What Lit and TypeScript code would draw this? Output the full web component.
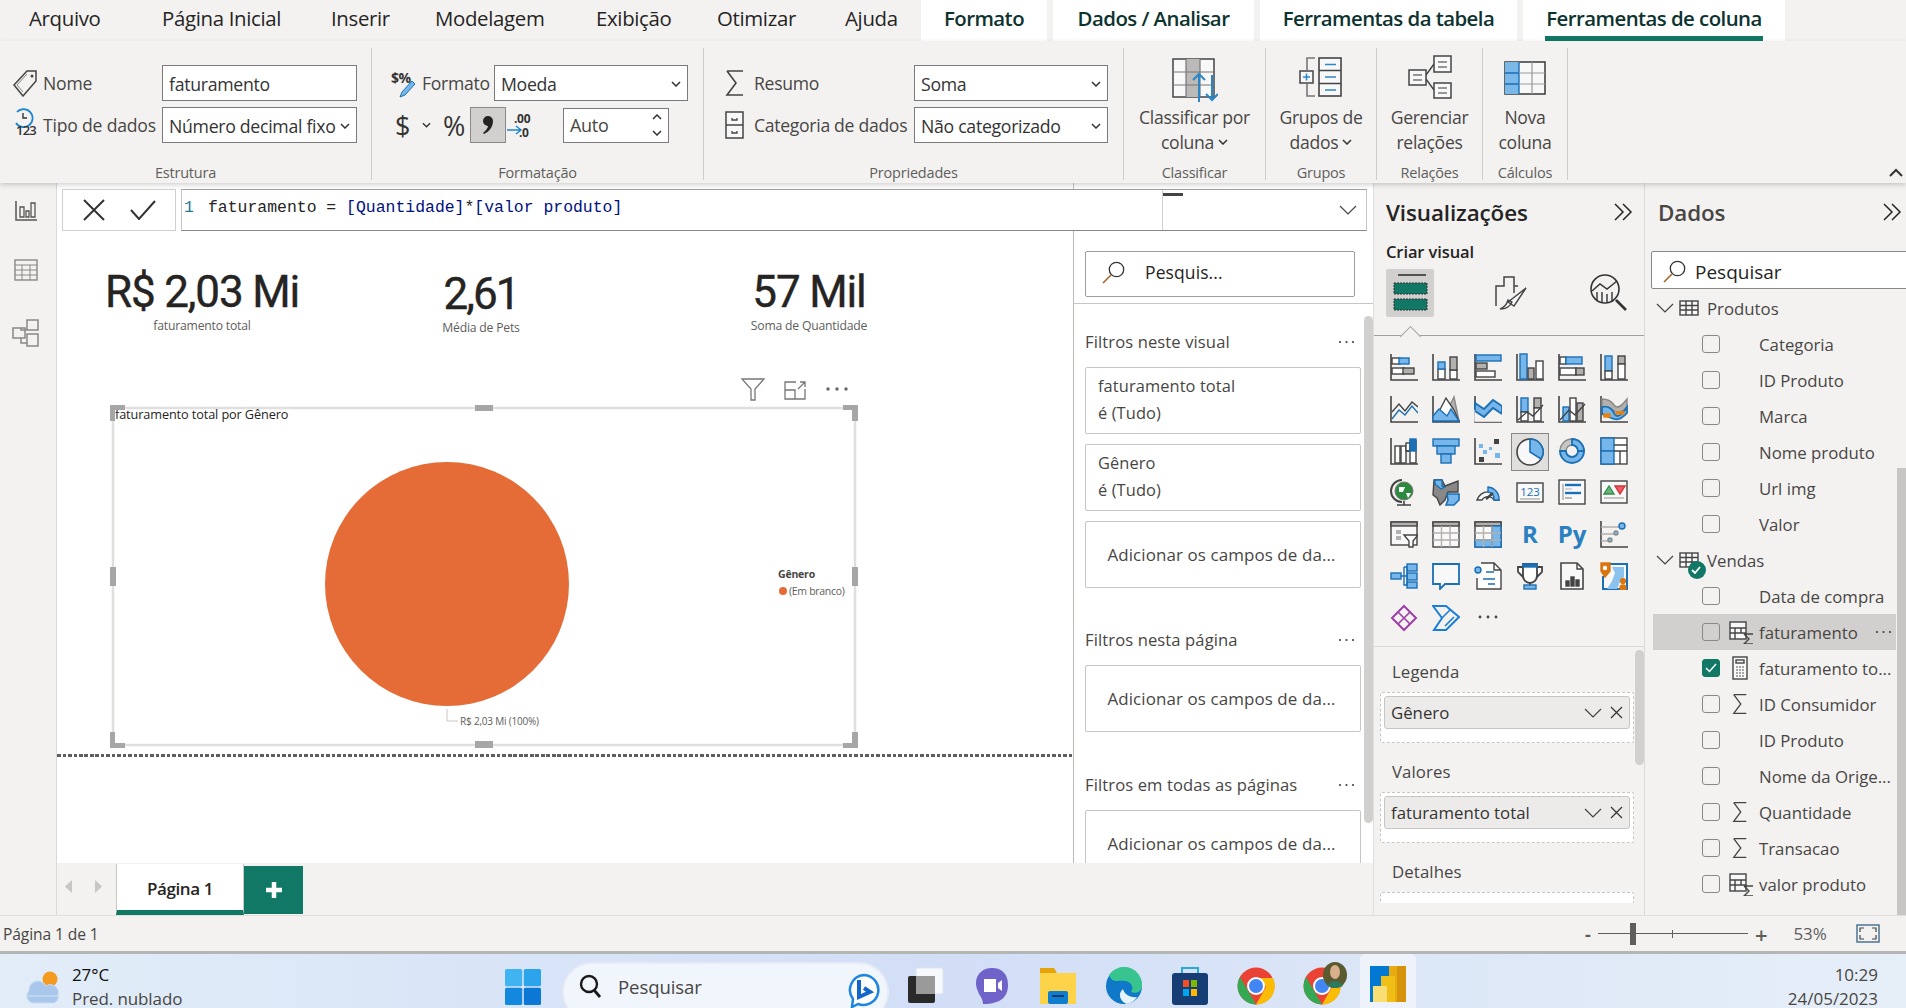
import { LitElement, html, svg, css } from 'lit';
import { customElement } from 'lit/decorators.js';

const D = '#444';
const B = '#76b6ea';
const S = '#1a6fb5';
const G = '#b3b0ad';
const W = '#fff';

const r = (x: number, y: number, w: number, h: number, f = W, s = D) =>
  svg`<rect x=${x} y=${y} width=${w} height=${h} fill=${f} stroke=${s} stroke-width="1.4" />`;
const p = (d: string, f = 'none', s = D, sw = 1.4) =>
  svg`<path d=${d} fill=${f} stroke=${s} stroke-width=${sw} />`;
const c = (x: number, y: number, rad: number, f = W, s = D, sw = 1.4) =>
  svg`<circle cx=${x} cy=${y} r=${rad} fill=${f} stroke=${s} stroke-width=${sw} />`;
const axes = p('M1 1V27H28', 'none', D, 1.6);

// strings are the two script visuals, drawn as plain text
const vizIcons = [
  svg`${axes}${r(2, 5, 8, 6)}${r(9, 5, 10, 6, B, S)}${r(2, 15, 12, 6)}${r(13, 15, 11, 6, G)}`,
  svg`${axes}${r(6, 16, 7, 10)}${r(6, 9, 7, 7, B, S)}${r(18, 17, 7, 9)}${r(18, 4, 7, 13, G)}`,
  svg`${axes}${r(2, 2, 25, 6, B, S)}${r(2, 10, 11, 6, G)}${r(2, 18, 19, 6)}`,
  svg`${axes}${r(4, 1, 7, 25, B, S)}${r(12, 15, 6, 11, G)}${r(20, 8, 7, 18)}`,
  svg`${axes}${r(2, 4, 6, 7)}${r(8, 4, 16, 7, B, S)}${r(2, 15, 16, 7)}${r(18, 15, 8, 7, G)}`,
  svg`${axes}${r(5, 3, 7, 15, B, S)}${r(5, 18, 7, 8)}${r(18, 3, 7, 8, G)}${r(18, 11, 7, 15)}`,
  svg`${axes}${p('M2 17L9 9L15 16L22 7L28 12')}${p('M2 24L9 15L15 20L22 11L28 18', 'none', S)}`,
  svg`${axes}${p('M16 14L22 2L27 26H18Z', G, '#8a8886')}${p('M2 26L14 3L22 15L27 26Z', W)}${p('M1 26V21L7 14L15 21L19 14L27 26Z', B, S)}`,
  svg`${axes}${p('M1 8L10 14L19 5L28 11V19L19 13L10 22L1 16Z', B, S, 1.8)}${p('M1 16L10 22L19 13L28 19V26H1Z', '#f3f2f1', '#f3f2f1')}${p('M1 16L10 22L19 13L28 19', 'none', S, 1.8)}`,
  svg`${axes}${r(5, 3, 7, 14, B, S)}${r(5, 17, 7, 9)}${r(18, 3, 7, 10, G)}${r(18, 13, 7, 13)}${p('M2 25L11 17L17 21L27 10')}`,
  svg`${axes}${r(5, 12, 6, 14, B, S)}${r(12, 3, 6, 23)}${r(19, 8, 6, 18, G)}${p('M2 25L11 15L17 20L27 9')}`,
  svg`${axes}${p('M2 4Q10 4 14 10T27 4V12Q20 20 14 16T2 12Z', G, '#8a8886')}${p('M2 12Q10 10 14 18T27 12V18Q20 26 14 24T2 19Z', B, S, 1.8)}${r(16, 17, 8, 2, '#e8820e', '#e8820e')}${r(4, 19, 6, 3, '#e8820e', '#e8820e')}`,
  svg`${axes}${r(5, 9, 5, 17)}${r(11, 9, 5, 17)}${r(16, 6, 4, 8)}${p('M16 14H20V4H26V26H20V14', W)}${r(20, 2, 6, 12, S, S)}`,
  svg`${r(1, 2, 26, 7, B, S)}${r(5, 9, 18, 8, B, S)}${r(9, 17, 10, 9, B, S)}`,
  svg`${axes}${r(5, 7, 4, 4, B, 'none')}${r(9, 13, 4, 4, B, 'none')}${r(5, 20, 5, 5, D, 'none')}${r(20, 2, 5, 5, D, 'none')}${r(21, 16, 5, 5, B, 'none')}${r(15, 10, 3, 3, B, 'none')}`,
  svg`${c(14, 14, 13, '#f8f8f8', D, 1.6)}${p('M14 14V1A13 13 0 0 1 25 21Z', B, S, 1.6)}`,
  svg`${p('M2 14A12 12 0 0 1 26 14H20A6 6 0 0 0 8 14Z', '#c8c6c4', '#8a8886')}${p('M2 14A12 12 0 1 0 26 14H20A6 6 0 1 1 8 14Z', B, S, 1.8)}${p('M14 2A12 12 0 0 1 26 14H20A6 6 0 0 0 14 8Z', B, S, 1.8)}`,
  svg`${r(1, 1, 26, 26)}${r(1, 1, 13, 13, B, S)}${r(1, 14, 13, 13, B, S)}${p('M14 8H27M20 14V27M14 14H27')}`,
  svg`${p('M12 2A11 11 0 0 0 12 24', 'none', D, 2)}${c(14, 13, 9, '#2c8a3e', '#777', 1)}${p('M9 9H15L13 14H9ZM16 15H21L18 20Z', W, 'none')}${p('M7 27H21M14 23V27', 'none', D, 1.6)}`,
  svg`${p('M2 2H10L13 8L26 3V14H16L13 22L8 27L5 20L1 17Z', '#8a8886', D)}${p('M3 2H10V8L13 9L9 11L3 6Z', B, S)}${p('M15 16H27V22L22 27H14L16 22Z', B, S, 1.6)}`,
  svg`${p('M3 22A11.5 11.5 0 0 1 25 22H20A7 7 0 0 0 8 22Z', '#f8f8f8', D)}${p('M14 9A12 12 0 0 1 25 22H20A7 7 0 0 0 14 14Z', B, S)}${p('M12 21L19 15', 'none', D, 2.4)}`,
  svg`${r(1, 5, 26, 19, '#f8f8f8')}<text x="14" y="18" text-anchor="middle" font-size="11.5" fill=${S} font-family="Open Sans">123</text>${p('M4 21H24', 'none', G)}`,
  svg`${r(1, 2, 26, 24, '#f8f8f8', D)}${p('M5 6V22', 'none', G, 1.6)}${p('M7 7H23', 'none', S, 2.4)}${p('M7 11H14', 'none', G, 1)}${p('M7 15H23', 'none', S, 2.4)}${p('M7 20H14', 'none', G, 1.8)}`,
  svg`${r(1, 3, 26, 22, '#f8f8f8')}${p('M4 16L9 8L14 16Z', '#6ab37a', '#2f8f4a')}${p('M15 8H25L20 16Z', '#ee5a63', '#d13438')}${p('M4 20H24', 'none', G)}`,
  svg`${r(1, 2, 26, 23, '#f8f8f8')}${r(1, 2, 26, 4, G)}${r(6, 10, 5, 4, G, 'none')}${r(6, 16, 5, 4, G, 'none')}${p('M14 15H28L23 21V27H19V21Z', W, D)}`,
  svg`${r(1, 2, 26, 25, '#f8f8f8')}${r(1, 2, 26, 4, G)}${p('M1 13H27M1 20H27M9.5 6V27M18 6V27', 'none', G)}`,
  svg`${r(1, 2, 26, 25, '#f8f8f8')}${r(1, 2, 26, 4, G)}${r(1, 20, 26, 7, B, S)}${r(18, 6, 9, 21, B, S)}${p('M1 13H27M1 20H27M9.5 6V27M18 6V27', 'none', G)}`,
  'R',
  'Py',
  svg`${axes}${p('M1 7H20M1 14H14M1 21H8', 'none', G, 1.4)}${c(22, 6, 3, B, S)}${c(16, 13, 2, B, '#8a8886')}${c(10, 20, 2, B, '#8a8886')}`,
  svg`${r(1, 11, 10, 6, B, S)}${r(17, 2, 10, 7, B, S)}${r(17, 11, 10, 7, B, S)}${r(17, 20, 10, 6, B, S)}${p('M11 14H17M14 5H17V23H14V5', 'none', S)}`,
  svg`${p('M1 2H27V22H13L8 27V22H1Z', '#f8f8f8', S, 1.8)}`,
  svg`${p('M7 1H20L27 8V27H3V16', W, D)}${p('M20 1V8H27', 'none', D)}${c(4, 8, 3, B, S)}${p('M12 10H20M9 17H21M14 22H21', 'none', S, 1.4)}`,
  svg`${p('M7 2H21V14A7 7 0 0 1 7 14ZM7 5H2V10L8 16M21 5H26V10L20 16', W, D, 1.8)}${r(7, 2, 14, 3, S, S)}${p('M14 20V23', 'none', D, 2)}${r(8, 23, 12, 4, B, S)}`,
  svg`${p('M3 1H19L25 7V27H3Z', '#f8f8f8', D, 1.6)}${p('M19 1V7H25', 'none', D)}${r(8, 19, 3, 5, D, D)}${r(13, 15, 3, 9, D, D)}${r(18, 18, 3, 6, D, D)}`,
  svg`${p('M5 2H27V27H3V14', '#f8f8f8', S, 2)}${p('M12 5H24V15L20 20L17 27H7L12 19L15 11Z', '#8cc3ee', 'none')}${p('M1 1H10V9L5 15L1 9Z', '#d9760e', '#d9760e')}${c(5, 6, 1.5, W, W)}${c(23, 19, 2.4, '#d9760e', '#d9760e')}${c(23, 26, 3, '#d9760e', '#d9760e')}`,
  svg`${p('M14 2L26 14L14 26L2 14Z', 'none', '#9c3fa8', 2)}${p('M8 8L20 20M20 8L8 20', 'none', '#9c3fa8', 1.6)}`,
  svg`${p('M1 2H14L27 13L14 26H2L10 14Z', 'none', '#1b7fd6', 2)}${p('M10 14L18 6M13 22L22 13', 'none', '#1b7fd6', 1.6)}`,
  svg`<circle cx="6" cy="13" r="1.4" fill="#444" /><circle cx="14" cy="13" r="1.4" fill="#444" /><circle cx="22" cy="13" r="1.4" fill="#444" />`,
];

const sigma = svg`<path d="M2 2H18M2 2L11 14L2 26H18" fill="none" stroke="#444" stroke-width="1.6" />`;
const measure = svg`${r(1, 2, 16, 17, '#f8f8f8')}${p('M1 8H17M1 13H17M6 8V19M12 8V13', 'none', D)}${p('M15 14H24M15 14L20 19L15 24H24', 'none', D, 1.4)}`;
const tableIco = svg`${r(1, 1, 18, 14, '#f8f8f8')}${p('M1 5.5H19M1 10H19M7 1V15M13 1V15', 'none', D)}`;
const calcIco = svg`${r(2, 1, 14, 22, '#f8f8f8')}${r(5, 4, 8, 3, '#f8f8f8')}<path d="M5 11H7M8 11H10M11 11H13M5 14H7M8 14H10M11 14H13M5 17H7M8 17H10M11 17H13M5 20H7M8 20H10M11 20H13" stroke="#555" />`;

type Field = { name: string; icon?: 'sigma' | 'measure' | 'calc'; checked?: boolean; hover?: boolean };

const produtos: Field[] = [
  { name: 'Categoria' },
  { name: 'ID Produto' },
  { name: 'Marca' },
  { name: 'Nome produto' },
  { name: 'Url img' },
  { name: 'Valor' },
];
const vendas: Field[] = [
  { name: 'Data de compra' },
  { name: 'faturamento', icon: 'measure', hover: true },
  { name: 'faturamento to...', icon: 'calc', checked: true },
  { name: 'ID Consumidor', icon: 'sigma' },
  { name: 'ID Produto' },
  { name: 'Nome da Orige...' },
  { name: 'Quantidade', icon: 'sigma' },
  { name: 'Transacao', icon: 'sigma' },
  { name: 'valor produto', icon: 'measure' },
];

const plainTabs = [
  ['Arquivo', 133],
  ['Página Inicial', 169],
  ['Inserir', 104],
  ['Modelagem', 161],
  ['Exibição', 121],
  ['Otimizar', 128],
  ['Ajuda', 76],
] as const;

const chevron = html`<svg class="mini" width="10" height="6" viewBox="0 0 10 6"><path d="M1 1L5 5L9 1" fill="none" stroke="#333" stroke-width="1.5" /></svg>`;
const bigChevron = html`<svg width="18" height="10" viewBox="0 0 18 10"><path d="M1 1L9 9L17 1" fill="none" stroke="#444" stroke-width="1.2" /></svg>`;
const cross = html`<svg width="13" height="13" viewBox="0 0 13 13"><path d="M1 1L12 12M12 1L1 12" fill="none" stroke="#333" stroke-width="1.2" /></svg>`;
const doubleChevron = html`<svg width="19" height="18" viewBox="0 0 19 18"><path d="M1 1L9 9L1 17M9 1L17 9L9 17" fill="none" stroke="#252423" stroke-width="1.5" /></svg>`;
const lens = html`<svg width="23" height="23" viewBox="0 0 23 23"><circle cx="14.5" cy="8.5" r="7.2" fill="none" stroke="#333" stroke-width="1.3" /><path d="M9 14L1 22" stroke="#a4642a" stroke-width="1.6" /></svg>`;
const ellipsis = html`<svg width="17" height="4" viewBox="0 0 17 4"><circle cx="2" cy="2" r="1.1" fill="#444" /><circle cx="8.5" cy="2" r="1.1" fill="#444" /><circle cx="15" cy="2" r="1.1" fill="#444" /></svg>`;

@customElement('app-root')
export class AppRoot extends LitElement {
  static styles = css`
    :host {
      display: block;
      width: 1906px;
      height: 1008px;
      overflow: hidden;
      background: #f3f2f1;
      font-family: 'Open Sans', 'Noto Sans', sans-serif;
      color: #252423;
    }
    * { box-sizing: border-box; }
    svg { display: block; flex: none; }

    .tabs { display: flex; height: 41px; padding-left: 29px; font-size: 20.4px; letter-spacing: -0.33px; }
    .tab { display: flex; align-items: center; height: 36px; }
    .ctx {
      display: flex; justify-content: center; align-items: center; height: 41px;
      background: #fff; margin-right: 6px; color: #0d3330; padding-bottom: 5px; font-weight: 600; letter-spacing: -0.55px;
    }
    .ctx span { display: flex; align-items: center; height: 41px; }
    .ctx .on { border-bottom: 5px solid #117865; padding: 0 1px; margin-bottom: -5px; }

    .ribbon {
      display: flex; height: 142px; padding: 7px 0 3px; position: relative; z-index: 2;
      box-shadow: 0 2px 5px rgba(0, 0, 0, 0.18); font-size: 17.6px; letter-spacing: -0.3px; color: #484644;
    }
    .group { display: flex; flex-direction: column; border-right: 1px solid #cfcdcb; }
    .gbody { flex: 1; min-height: 0; }
    .glabel { text-align: center; font-size: 14.5px; height: 22px; line-height: 30px; color: #605e5c; letter-spacing: -0.2px; white-space: nowrap; }
    .form { display: flex; flex-direction: column; gap: 6px; padding-top: 17px; }
    .frow { display: flex; align-items: center; height: 36px; white-space: nowrap; }
    .g1 { width: 372px; } .g1 .form { padding-left: 13px; }
    .g1 .lico { width: 30px; } .g1 .ltxt { width: 119px; letter-spacing: -0.2px; }
    .g2 { width: 332px; } .g2 .form { padding-left: 19px; }
    .g2 .lico { width: 31px; } .g2 .ltxt { width: 72px; }
    .g3 { width: 420px; } .g3 .form { padding-left: 21px; }
    .g3 .lico { width: 29px; } .g3 .ltxt { width: 160px; }
    .g4 { width: 142px; } .g5 { width: 111px; } .g6 { width: 106px; } .g7 { width: 85px; }
    .combo {
      display: flex; align-items: center; justify-content: space-between; height: 36px; background: #fff;
      border: 1px solid #7a7a7a; padding: 2px 6px 0 6px; font-size: 17.7px; letter-spacing: -0.3px; color: #333; white-space: nowrap;
    }
    .w195 { width: 195px; } .w194 { width: 194px; }
    .fmt { display: flex; align-items: center; height: 36px; color: #333; font-size: 27px; }
    .dollar { width: 13px; margin-left: 4px; text-align: center; }
    .pct { margin-left: 9px; width: 28px; text-align: center; }
    .fmt .mini { margin-left: 14px; width: 9px; }
    .comma { width: 36px; height: 36px; background: #d2d0ce; border: 1px solid #8a8886; display: flex; align-items: center; justify-content: center; margin-left: 2px; }
    .spin {
      display: flex; align-items: center; justify-content: space-between; width: 106px; height: 35px; background: #fff;
      border: 1px solid #7a7a7a; margin-left: 31px; padding: 0 6px 0 6px; font-size: 18px; letter-spacing: -0.3px;
    }
    .spin div { display: flex; flex-direction: column; gap: 10px; }
    .big { display: flex; flex-direction: column; align-items: center; color: #484644; line-height: 24.5px; white-space: nowrap; }
    .big .pic { height: 56px; display: flex; align-items: flex-end; margin-bottom: 1px; }
    .big .ln { display: flex; align-items: center; gap: 4px; }
    .mb2 { margin-bottom: 2px; } .mb5 { margin-bottom: 5px; } .mb7 { margin-bottom: 7px; } .mb9 { margin-bottom: 9px; }
    .collapse { position: absolute; right: 3px; bottom: 6px; }

    .main { display: flex; height: 732px; }
    .rail { width: 57px; border-right: 1px solid #dcdad8; display: flex; flex-direction: column; align-items: center; padding: 18px 5px 0 0; gap: 38px; }
    .mid { width: 1317px; display: flex; flex-direction: column; background: #fff; border-right: 1px solid #e1dfdd; }
    .fbar { display: flex; height: 48px; padding: 6px 6px 0 5px; gap: 5px; position: relative; }
    .fbar::after { content: ''; position: absolute; left: 1016px; top: 0; height: 6px; border-left: 1px solid #c8c6c4; }
    .fbtns { width: 114px; border: 1px solid #d2d0ce; display: flex; align-items: center; padding-left: 20px; gap: 25px; }
    .ftext {
      flex: 1; border: 1px solid #c8c6c4; border-bottom-color: #8a8886; border-top-color: #a19f9d; display: flex; justify-content: space-between;
      font: 16.45px/35px 'Liberation Mono', monospace; padding-left: 2px; color: #252423; white-space: pre;
    }
    .ftext i { font-style: normal; color: #001080; }
    .ftext b { font-weight: 400; color: #237893; display: inline-block; width: 24px; }
    .fexp { width: 204px; border-left: 1px solid #d2d0ce; display: flex; justify-content: flex-end; align-items: center; padding-right: 9px; position: relative; }
    .fexp::before { content: ''; position: absolute; left: 0; top: 3px; width: 20px; height: 3px; background: #444; }

    .work { display: flex; height: 632px; }
    .canvas { width: 1016px; background: #fff; }
    .cards { display: grid; grid-template-columns: 290px 268px 388px; height: 147px; padding-top: 38px; text-align: center; }
    .val { font: 400 44px/46px Roboto, sans-serif; letter-spacing: -1.15px; color: #252423; -webkit-text-stroke: 0.4px #252423; }
    .narrow { letter-spacing: -2px; }
    .cap { font-size: 12.2px; line-height: 16px; margin-top: 3px; color: #605e5c; letter-spacing: -0.2px; }
    .second { margin-top: 2px; }
    .vtools { display: flex; height: 26px; justify-content: flex-end; align-items: flex-start; gap: 19px; padding-right: 224px; }
    .chart { margin-left: 52px; }
    .dots { height: 3px; margin-top: 4px; background: repeating-linear-gradient(90deg, #605e5c 0 3.5px, transparent 3.5px 5.5px); }

    .filters { width: 300px; border-left: 1px solid #bdbbb9; padding: 20px 0 0 11px; overflow: hidden; position: relative; font-size: 16.6px; color: #484644; letter-spacing: 0.1px; }
    .fsearch { width: 270px; height: 46px; border: 1px solid #a19f9d; border-radius: 2px; display: flex; align-items: center; padding: 0 0 4px 16px; gap: 20px; color: #252423; font-size: 17.5px; }
    .frule { height: 1px; background: #c8c6c4; margin: 6px 0 0 -11px; }
    .fhead { display: flex; justify-content: space-between; align-items: center; width: 270px; white-space: nowrap; line-height: 22px; }
    .h1 { margin-top: 27px; } .h2 { margin-top: 41px; } .h3 { margin-top: 42px; }
    .fcard { width: 276px; height: 67px; border: 1px solid #c8c6c4; border-radius: 2px; margin-top: 14px; padding: 4px 12px; line-height: 27px; font-size: 16.4px; }
    .fcard + .fcard { margin-top: 10px; }
    .fadd { display: flex; align-items: center; justify-content: center; white-space: nowrap; padding: 0 3px 0 0; font-size: 16.95px; }
    .fscroll { position: absolute; left: 290px; top: 85px; width: 9px; height: 507px; background: #d2d0ce; border-radius: 5px; }

    .pages { display: flex; height: 52px; background: #f3f2f1; border-top: 1px solid #f3f2f1; }
    .parrows { width: 59px; display: flex; gap: 23px; align-items: center; padding-left: 8px; margin-bottom: 6px; }
    .ptab { width: 128px; background: #fff; border: 1px solid #c8c6c4; border-width: 0 1px; border-bottom: 5px solid #117865; display: flex; align-items: center; justify-content: center; font-size: 17px; font-weight: 600; letter-spacing: -0.4px; padding-top: 2px; }
    .padd { width: 59px; height: 48px; margin-top: 2px; background: #117865; display: flex; align-items: center; justify-content: center; }

    .viz { width: 271px; padding: 0; border-right: 1px solid #dcdad8; position: relative; overflow: hidden; }
    .phead { display: flex; justify-content: space-between; align-items: center; height: 58px; font-size: 22.4px; font-weight: 600; letter-spacing: -0.1px; }
    .viz .phead { padding: 0 11px 0 12px; }
    .viz h4 { margin: 0; padding: 2px 12px 0; font-size: 16.5px; font-weight: 600; line-height: 18px; height: 28px; letter-spacing: -0.1px; }
    .builds { display: flex; height: 67px; border-bottom: 1px solid #a19f9d; padding-left: 12px; position: relative; align-items: flex-start; }
    .builds::after { content: ''; position: absolute; left: 29px; top: 60px; width: 14px; height: 14px; background: #f3f2f1; border: 1px solid #a19f9d; border-width: 1px 0 0 1px; transform: rotate(45deg); }
    .bsel { width: 48px; height: 48px; background: #d2d0ce; border-radius: 2px; display: flex; align-items: center; justify-content: center; }
    .bpaint { margin: 7px 0 0 60px; }
    .blens { margin: 5px 0 0 62px; }
    .vgrid { display: grid; grid-template-columns: repeat(6, 42px); grid-auto-rows: 34px; row-gap: 7.8px; padding: 14px 0 0 9px; height: 311px; border-bottom: 1px solid #dcdad8; }
    .vcell { display: flex; align-items: center; justify-content: center; }
    .vsel { background: #e1dfdd; outline: 1px solid #8a8886; width: 36px; height: 36px; margin: auto; }
    .script { font-size: 24px; font-weight: 700; color: #2a80c0; line-height: 28px; height: 28px; }
    .wells { padding: 12px 6px 0 6px; font-size: 16.8px; color: #484644; height: 256px; overflow: hidden; }
    .wtitle { padding-left: 12px; height: 33px; line-height: 26px; letter-spacing: 0.1px; }
    .well { width: 254px; height: 51px; border: 1px dashed #c8c6c4; border-radius: 2px; background: #fff; padding: 3px; margin-bottom: 16px; }
    .pill { height: 33px; background: #edebe9; border: 1px solid #c8c6c4; border-radius: 3px; display: flex; align-items: center; justify-content: space-between; padding: 0 6px; gap: 8px; }
    .pill span { flex: 1; white-space: nowrap; color: #333; }
    .vscroll { position: absolute; left: 261px; top: 467px; width: 9px; height: 115px; background: #d2d0ce; border-radius: 5px; }

    .data { width: 261px; overflow: hidden; position: relative; font-size: 16.8px; color: #484644; }
    .data .phead { padding: 0 4px 0 13px; }
    .dsearch { width: 270px; height: 38px; margin: 10px 0 1px 6px; background: #fff; border: 1px solid #8a8886; border-radius: 2px; display: flex; align-items: center; padding: 3px 0 0 11px; gap: 9px; font-size: 19px; color: #252423; }
    .drow { display: flex; align-items: center; height: 36px; width: 243px; margin-left: 8px; white-space: nowrap; position: relative; }
    .dhover { background: #d2d0ce; }
    .dhead { height: 36px; }
    .dhead svg:first-child { margin: 0 5px 0 3px; }
    .dhead .tname { margin-left: 8px; }
    .box { width: 18px; height: 18px; border: 1px solid #8a8886; border-radius: 3px; margin-left: 49px; display: flex; align-items: center; justify-content: center; }
    .box.on { background: #117865; border-color: #117865; }
    .fico { width: 39px; display: flex; justify-content: center; }
    .fmeasure { margin-left: 3px; }
    .more { position: absolute; right: 4px; }
    .badge { position: absolute; left: 35px; top: 19px; width: 18px; height: 18px; border-radius: 50%; background: #117865; display: flex; align-items: center; justify-content: center; }
    .dscroll { position: absolute; left: 252px; top: 285px; width: 9px; height: 447px; background: #c8c6c4; }

    .status { display: flex; align-items: center; height: 36px; border-top: 1px solid #e1dfdd; padding-left: 3px; font-size: 15.6px; color: #484644; letter-spacing: -0.1px; }
    .zoom { display: flex; align-items: center; margin-left: auto; color: #605e5c; }
    .minus { width: 13px; font-weight: 700; font-size: 18px; }
    .slider { width: 150px; height: 22px; position: relative; background: linear-gradient(#605e5c, #605e5c) center / 100% 1px no-repeat; }
    .thumb { position: absolute; left: 32px; top: 0; width: 6px; height: 22px; background: #605e5c; }
    .tick { position: absolute; left: 74px; top: 7px; width: 1px; height: 8px; background: #605e5c; }
    .plus { margin-left: 7px; width: 25px; font-size: 22px; font-weight: 600; line-height: 20px; }
    .zpct { width: 62.5px; font-size: 17px; margin-left: 13.5px; }
    .zfit { margin-right: 26px; }

    .task {
      display: flex; height: 57px; border-top: 3px solid #b5b5b5; overflow: hidden; align-items: flex-start; position: relative; color: #333;
      background: linear-gradient(90deg, #e2edf8 0%, #d9e5f7 25%, #d2def6 50%, #dbe6f7 72%, #e6eff8 100%);
    }
    .weather { display: flex; gap: 11px; padding: 14px 0 0 25px; width: 505px; }
    .wtxt { font-size: 17px; line-height: 24px; margin-top: -5px; white-space: nowrap; letter-spacing: -0.1px; }
    .wtxt div:first-child { color: #111; }
    .wtxt div:last-child { color: #484644; line-height: 18px; margin-top: 3px; }
    .win { margin-top: 15px; }
    .tsearch { width: 327px; height: 60px; margin: 8px 0 0 21px; background: #f1f5fc; border: 2px solid #e6ebf6; border-radius: 30px; display: flex; align-items: flex-start; padding: 10px 7px 0 15px; font-size: 18.6px; gap: 15px; color: #484644; letter-spacing: -0.1px; }
    .tsearch svg:first-child { margin-top: -1px; }
    .tsearch svg:last-child { margin-left: auto; margin-top: -1px; }
    .apps { display: flex; align-items: flex-start; margin-left: 4px; }
    .app { width: 66px; padding-top: 13px; display: flex; justify-content: center; position: relative; }
    .app.sel { width: 56px; height: 60px; margin-left: 5px; padding-top: 12px; background: #eef3fb; border-radius: 5px; }
    .avatar { position: absolute; left: 34px; top: 8px; }
    .clock { margin-left: auto; padding: 9px 28px 0 0; text-align: right; font-size: 17px; line-height: 24px; color: #484644; }
    .clock div:last-child { line-height: 18px; margin-top: 3px; }
  `;

  private tableGlyph() {
    return html`<svg width="20" height="16" viewBox="0 0 20 16">${tableIco}</svg>`;
  }

  private ribbon() {
    return html`
      <div class="ribbon">
        <div class="group g1">
          <div class="gbody form">
            <div class="frow">
              <div class="lico">
                <svg width="24" height="28" viewBox="0 0 24 28"><path d="M14 2H23V12L10 27L1 16Z" fill="none" stroke="#444" stroke-width="1.5" /><path d="M14 5L4 16L10 23" fill="none" stroke="#888" /><circle cx="19" cy="7" r="1.5" fill="#444" /></svg>
              </div>
              <div class="ltxt">Nome</div>
              <div class="combo w195">faturamento</div>
            </div>
            <div class="frow">
              <div class="lico">
                <svg width="27" height="34" viewBox="0 0 27 34"><path d="M4 4A9 9 0 1 1 3 15" fill="none" stroke="#1a86d0" stroke-width="1.8" /><path d="M10 5V10H14" fill="none" stroke="#333" stroke-width="1.4" /><text x="3" y="27" font-size="13" font-weight="600" fill="#333" font-family="Open Sans" letter-spacing="-0.8">123</text></svg>
              </div>
              <div class="ltxt">Tipo de dados</div>
              <div class="combo w195">Número decimal fixo ${chevron}</div>
            </div>
          </div>
          <div class="glabel">Estrutura</div>
        </div>
        <div class="group g2">
          <div class="gbody form">
            <div class="frow">
              <div class="lico">
                <svg width="25" height="30" viewBox="0 0 25 30"><text x="0" y="15" font-size="14" font-weight="700" fill="#333" font-family="Open Sans" letter-spacing="-0.5">$%</text><path d="M21 13L24 16L14 27L9 29L11 24Z" fill="#76b6ea" stroke="#1a6fb5" /></svg>
              </div>
              <div class="ltxt">Formato</div>
              <div class="combo w194">Moeda ${chevron}</div>
            </div>
            <div class="frow">
              <div class="fmt">
                <span class="dollar">$</span>
                ${chevron}
                <span class="pct">%</span>
                <span class="comma">
                  <svg width="12" height="20" viewBox="0 0 12 20"><path d="M6 1A5 5 0 0 1 11 6C11 12 7 17 2 19L1 18C4 15 6 13 6 11A5 5 0 0 1 6 1Z" fill="#252423" /></svg>
                </span>
                <svg width="26" height="30" viewBox="0 0 26 30"><text x="8" y="13" font-size="12" font-weight="700" fill="#333" font-family="Open Sans">.00</text><text x="13" y="27" font-size="12" font-weight="700" fill="#333" font-family="Open Sans">.0</text><path d="M1 20H14M10 16L15 20L10 24" fill="none" stroke="#1a86d0" stroke-width="1.4" /></svg>
              </div>
              <div class="spin">
                Auto
                <div>
                  <svg width="10" height="6" viewBox="0 0 10 6"><path d="M1 5L5 1L9 5" fill="none" stroke="#333" stroke-width="1.5" /></svg>
                  ${chevron}
                </div>
              </div>
            </div>
          </div>
          <div class="glabel">Formatação</div>
        </div>
        <div class="group g3">
          <div class="gbody form">
            <div class="frow">
              <div class="lico"><svg width="20" height="28" viewBox="0 0 20 28">${sigma}</svg></div>
              <div class="ltxt">Resumo</div>
              <div class="combo w194">Soma ${chevron}</div>
            </div>
            <div class="frow">
              <div class="lico">
                <svg width="19" height="28" viewBox="0 0 19 28"><rect x="1" y="1" width="17" height="26" fill="#f8f8f8" stroke="#444" stroke-width="1.5" /><path d="M1 14H18M7 7V9H12V7M7 20V22H12V20" fill="none" stroke="#444" stroke-width="1.3" /></svg>
              </div>
              <div class="ltxt">Categoria de dados</div>
              <div class="combo w194">Não categorizado ${chevron}</div>
            </div>
          </div>
          <div class="glabel">Propriedades</div>
        </div>
        <div class="group g4">
          <div class="gbody big">
            <div class="pic">
              <svg class="mb2" width="46" height="44" viewBox="0 0 46 44">
                <rect x="1" y="1" width="41" height="38" fill="#f8f8f8" stroke="#444" stroke-width="1.5" />
                <rect x="14" y="1" width="14" height="38" fill="#bcbab8" />
                <path d="M1 14H42M1 27H42M14 1V39M28 1V39" fill="none" stroke="#777" stroke-width="1.2" />
                <path d="M27 44V16M21 22L27 16L33 22M40 17V42M34 36L40 42L46 36" fill="none" stroke="#2a86c8" stroke-width="2" />
              </svg>
            </div>
            <div>Classificar por</div>
            <div class="ln">coluna ${chevron}</div>
          </div>
          <div class="glabel">Classificar</div>
        </div>
        <div class="group g5">
          <div class="gbody big">
            <div class="pic">
              <svg class="mb7" width="44" height="40" viewBox="0 0 44 40">
                <path d="M16 1H8V13M8 27V39H16" fill="none" stroke="#777" stroke-width="1.6" />
                <rect x="1" y="14" width="13" height="12" fill="#f8f8f8" stroke="#444" stroke-width="1.5" />
                <path d="M4 20H11M7.5 16.5V23.5" stroke="#2a86c8" stroke-width="1.5" />
                <rect x="20" y="1" width="22" height="38" fill="#f8f8f8" stroke="#444" stroke-width="1.6" />
                <path d="M20 13.5H42M20 26.5H42" stroke="#444" stroke-width="1.4" />
                <path d="M26 7.5H37M26 20H37M26 33H37" stroke="#2a86c8" stroke-width="1.6" />
              </svg>
            </div>
            <div>Grupos de</div>
            <div class="ln">dados ${chevron}</div>
          </div>
          <div class="glabel">Grupos</div>
        </div>
        <div class="group g6">
          <div class="gbody big">
            <div class="pic">
              <svg class="mb5" width="44" height="44" viewBox="0 0 44 44">
                <path d="M18 20L26 9M18 24L26 35" stroke="#444" stroke-width="1.4" />
                <rect x="1" y="15" width="17" height="15" fill="#f8f8f8" stroke="#444" stroke-width="1.5" />
                <rect x="26" y="1" width="17" height="16" fill="#f8f8f8" stroke="#444" stroke-width="1.5" />
                <rect x="26" y="28" width="17" height="15" fill="#f8f8f8" stroke="#444" stroke-width="1.5" />
                <path d="M5 20H14M5 25H14M30 7H39M30 12H39M30 33H39M30 38H39" stroke="#777" stroke-width="1.4" />
              </svg>
            </div>
            <div>Gerenciar</div>
            <div>relações</div>
          </div>
          <div class="glabel">Relações</div>
        </div>
        <div class="group g7">
          <div class="gbody big">
            <div class="pic">
              <svg class="mb9" width="42" height="34" viewBox="0 0 42 34">
                <rect x="1" y="1" width="40" height="32" fill="#f8f8f8" stroke="#444" stroke-width="1.6" />
                <rect x="1" y="1" width="14" height="32" fill="#7ab8ea" />
                <path d="M1 12H15M1 23H15M15 1V33" stroke="#1a6fb5" stroke-width="1.4" />
                <path d="M15 12H41M15 23H41M28 1V33" stroke="#999" stroke-width="1.2" />
              </svg>
            </div>
            <div>Nova</div>
            <div>coluna</div>
          </div>
          <div class="glabel">Cálculos</div>
        </div>
        <svg class="collapse" width="14" height="9" viewBox="0 0 14 9"><path d="M1 8L7 2L13 8" fill="none" stroke="#333" stroke-width="2" /></svg>
      </div>
    `;
  }

  private chart() {
    const hs = '#a6a6a6';
    return html`
      <svg class="chart" width="752" height="346" viewBox="0 0 752 346" font-family="Open Sans">
        <rect x="4" y="4" width="742" height="337" fill="#fff" stroke="#e1dfdd" stroke-width="2.5" />
        <text x="6" y="15" font-size="12.7" fill="#252423" letter-spacing="-0.1">faturamento total por Gênero</text>
        <circle cx="338" cy="180" r="122" fill="#e66c37" />
        <path d="M338 305V317H349" fill="none" stroke="#c8c6c4" />
        <text x="351" y="321" font-size="10" fill="#605e5c" letter-spacing="-0.2">R$ 2,03 Mi (100%)</text>
        <text x="669" y="174" font-size="10.5" font-weight="700" fill="#484644" letter-spacing="-0.2">Gênero</text>
        <circle cx="674" cy="187" r="4" fill="#e66c37" />
        <text x="680" y="191" font-size="10.5" fill="#605e5c" letter-spacing="-0.3">(Em branco)</text>
        <path d="M1 1H16V6H6V17H1Z" fill=${hs} />
        <path d="M734 1H749V17H743V6H734Z" fill=${hs} />
        <path d="M1 328H6V339H16V344H1Z" fill=${hs} />
        <path d="M743 328H749V344H734V339H743Z" fill=${hs} />
        <rect x="366" y="1" width="18" height="6" fill=${hs} />
        <rect x="366" y="337" width="18" height="7" fill=${hs} />
        <rect x="1" y="163" width="6" height="19" fill=${hs} />
        <rect x="743" y="163" width="6" height="19" fill=${hs} />
      </svg>
    `;
  }

  private work() {
    return html`
      <div class="work">
        <div class="canvas">
          <div class="cards">
            <div><div class="val">R$ 2,03 Mi</div><div class="cap">faturamento total</div></div>
            <div class="second"><div class="val narrow">2,61</div><div class="cap">Média de Pets</div></div>
            <div><div class="val">57 Mil</div><div class="cap">Soma de Quantidade</div></div>
          </div>
          <div class="vtools">
            <svg width="24" height="23" viewBox="0 0 24 23"><path d="M1 1H23L14 11V22H10V11Z" fill="none" stroke="#777" stroke-width="1.3" /></svg>
            <svg style="margin-top:3px" width="22" height="19" viewBox="0 0 22 19"><path d="M12 1H1V18H21V8M1 9H11V18M14 8L21 1M16 1H21V6" fill="none" stroke="#777" stroke-width="1.3" /></svg>
            <svg width="24" height="22" viewBox="0 0 24 22"><circle cx="3" cy="11" r="1.7" fill="#666" /><circle cx="12" cy="11" r="1.7" fill="#666" /><circle cx="21" cy="11" r="1.7" fill="#666" /></svg>
          </div>
          ${this.chart()}
          <div class="dots"></div>
        </div>
        <div class="filters">
          <div class="fsearch">${lens} Pesquis...</div>
          <div class="frule"></div>
          <div class="fhead h1"><span>Filtros neste visual</span>${ellipsis}</div>
          <div class="fcard">faturamento total<br />é (Tudo)</div>
          <div class="fcard">Gênero<br />é (Tudo)</div>
          <div class="fcard fadd">Adicionar os campos de da...</div>
          <div class="fhead h2"><span>Filtros nesta página</span>${ellipsis}</div>
          <div class="fcard fadd">Adicionar os campos de da...</div>
          <div class="fhead h3"><span>Filtros em todas as páginas</span>${ellipsis}</div>
          <div class="fcard fadd">Adicionar os campos de da...</div>
          <div class="fscroll"></div>
        </div>
      </div>
    `;
  }

  private viz() {
    return html`
      <div class="viz">
        <div class="phead"><span>Visualizações</span>${doubleChevron}</div>
        <h4>Criar visual</h4>
        <div class="builds">
          <div class="bsel">
            <svg width="36" height="38" viewBox="0 0 36 38">
              <path d="M6 1H34" stroke="#333" stroke-width="1.6" />
              <rect x="2" y="9" width="33" height="11" fill="#117865" stroke="#333" stroke-dasharray="2 1" />
              <rect x="2" y="25" width="33" height="11" fill="#117865" stroke="#333" stroke-dasharray="2 1" />
            </svg>
          </div>
          <svg class="bpaint" width="34" height="34" viewBox="0 0 34 34">
            <path d="M2 30V10H10V1H20V17M20 10H24" fill="none" stroke="#444" stroke-width="1.5" />
            <path d="M14 26L32 12L20 30Z M6 33Q15 33 18 26L14 24Q12 31 6 33Z" fill="#f8f8f8" stroke="#444" stroke-width="1.4" />
          </svg>
          <svg class="blens" width="37" height="37" viewBox="0 0 37 37">
            <circle cx="15" cy="15" r="14" fill="none" stroke="#333" stroke-width="1.6" />
            <path d="M2 17L10 10L17 15L27 7M7 18V26M12 18V28M17 20V29M22 18V28" fill="none" stroke="#333" stroke-width="1.4" />
            <path d="M26 26L36 36" stroke="#333" stroke-width="2.6" />
          </svg>
        </div>
        <div class="vgrid">
          ${vizIcons.map(
            (ic, i) => html`
              <div class="vcell">
                <div class="vcell ${i === 15 ? 'vsel' : ''}">
                  ${typeof ic === 'string'
                    ? html`<span class="script">${ic}</span>`
                    : html`<svg width="28" height="28" viewBox="0 0 28 28">${ic}</svg>`}
                </div>
              </div>
            `
          )}
        </div>
        <div class="wells">
          <div class="wtitle">Legenda</div>
          <div class="well"><div class="pill"><span>Gênero</span>${bigChevron}${cross}</div></div>
          <div class="wtitle">Valores</div>
          <div class="well"><div class="pill"><span>faturamento total</span>${bigChevron}${cross}</div></div>
          <div class="wtitle">Detalhes</div>
          <div class="well"></div>
        </div>
        <div class="vscroll"></div>
      </div>
    `;
  }

  private fieldIcon(f: Field) {
    if (f.icon === 'sigma')
      return html`<svg width="16" height="22" viewBox="0 0 20 28">${sigma}</svg>`;
    if (f.icon === 'measure')
      return html`<svg class="fmeasure" width="24" height="24" viewBox="0 0 24 24">${measure}</svg>`;
    if (f.icon === 'calc')
      return html`<svg width="18" height="24" viewBox="0 0 18 24">${calcIco}</svg>`;
    return '';
  }

  private field(f: Field) {
    return html`
      <div class="drow ${f.hover ? 'dhover' : ''}">
        <div class="box ${f.checked ? 'on' : ''}">
          ${f.checked
            ? html`<svg width="12" height="10" viewBox="0 0 12 10"><path d="M1 5L4.5 8.5L11 1" fill="none" stroke="#fff" stroke-width="1.5" /></svg>`
            : ''}
        </div>
        <div class="fico">${this.fieldIcon(f)}</div>
        <span>${f.name}</span>
        ${f.hover ? html`<span class="more">${ellipsis}</span>` : ''}
      </div>
    `;
  }

  private dataPane() {
    return html`
      <div class="data">
        <div class="phead"><span>Dados</span>${doubleChevron}</div>
        <div class="dsearch">${lens} Pesquisar</div>
        <div class="drow dhead">
          ${bigChevron}${this.tableGlyph()}<span class="tname">Produtos</span>
        </div>
        ${produtos.map(f => this.field(f))}
        <div class="drow dhead">
          ${bigChevron}${this.tableGlyph()}<span class="tname">Vendas</span>
          <div class="badge"><svg width="10" height="8" viewBox="0 0 10 8"><path d="M1 4L4 7L9 1" fill="none" stroke="#fff" stroke-width="1.8" /></svg></div>
        </div>
        ${vendas.map(f => this.field(f))}
        <div class="dscroll"></div>
      </div>
    `;
  }

  private chrome() {
    return html`
      <svg width="38" height="38" viewBox="0 0 38 38">
        <circle cx="19" cy="19" r="18.5" fill="#ea4335" />
        <path d="M3 10L13 27L19 37.5A18.5 18.5 0 0 1 3 10Z" fill="#34a853" />
        <path d="M19 37.5L29 20L19 11H36A18.5 18.5 0 0 1 19 37.5Z" fill="#fbbc05" />
        <circle cx="19" cy="19" r="9" fill="#fff" />
        <circle cx="19" cy="19" r="7" fill="#4285f4" />
      </svg>
    `;
  }

  private taskbar() {
    return html`
      <div class="task">
        <div class="weather">
          <svg width="36" height="36" viewBox="0 0 36 36">
            <circle cx="25" cy="11" r="7.5" fill="#f39a1f" />
            <path d="M8 35A7 7 0 0 1 4 23A9 9 0 0 1 21 18A8 8 0 0 1 33 27A7 7 0 0 1 29 35Z" fill="#a9c7ea" stroke="#c9dcf3" />
            <path d="M3 28H34" stroke="#d3e3f7" />
          </svg>
          <div class="wtxt"><div>27°C</div><div>Pred. nublado</div></div>
        </div>
        <svg class="win" width="36" height="36" viewBox="0 0 36 36">
          <rect width="17.2" height="17.2" rx="1.5" fill="#3fb4f0" /><rect x="18.8" width="17.2" height="17.2" rx="1.5" fill="#2ba4ec" />
          <rect y="18.8" width="17.2" height="17.2" rx="1.5" fill="#1289de" /><rect x="18.8" y="18.8" width="17.2" height="17.2" rx="1.5" fill="#0a78d4" />
        </svg>
        <div class="tsearch">
          <svg width="24" height="26" viewBox="0 0 24 26"><circle cx="10" cy="11" r="8" fill="none" stroke="#1a1a1a" stroke-width="2.4" /><path d="M15 17L21 24" stroke="#1a1a1a" stroke-width="2.8" /></svg>
          <span>Pesquisar</span>
          <svg width="32" height="36" viewBox="0 0 32 36"><path d="M16 2A15 15 0 1 1 10 31L4 34L5 26A15 15 0 0 1 16 2Z" fill="#fff" stroke="#1f86e0" stroke-width="2.5" /><path d="M11 7V24L22 19L16 15" fill="none" stroke="#1466c8" stroke-width="4" /></svg>
        </div>
        <div class="apps">
          <div class="app">
            <svg width="36" height="36" viewBox="0 0 36 36"><rect x="8" y="1" width="27" height="26" rx="2" fill="#f7f9fc" stroke="#dfe5ee" /><rect x="0" y="9" width="27" height="27" rx="2" fill="#2a2a2a" /><rect x="8" y="9" width="19" height="18" fill="#9a9a9a" /></svg>
          </div>
          <div class="app">
            <svg width="34" height="38" viewBox="0 0 34 38"><path d="M17 1C27 1 33 7 33 18C33 29 27 37 8 37C8 33 6 30 4 27C2 22 1 20 1 16C1 7 8 1 17 1Z" fill="#6f63c9" /><path d="M9 12H21V25H9ZM23 16L27 13V24L23 21Z" fill="#fff" /></svg>
          </div>
          <div class="app">
            <svg width="36" height="38" viewBox="0 0 36 38"><path d="M0 1H14L17 6H36V37H0Z" fill="#e5a50a" /><rect y="6" width="36" height="31" rx="1" fill="#fdd34a" /><rect x="8" y="24" width="20" height="13" rx="2" fill="#0f7ed0" /><rect x="12" y="28" width="12" height="2" fill="#083c6e" /></svg>
          </div>
          <div class="app">
            <svg width="36" height="38" viewBox="0 0 36 38"><circle cx="18" cy="19" r="18" fill="#0f78c8" /><path d="M3 8A18 18 0 0 1 36 19C36 25 30 27 25 25C28 21 26 15 19 14C11 13 7 17 3 8Z" fill="#37c48f" /><path d="M21 37C13 34 12 26 17 22C18 27 24 31 31 30C29 33 26 36 21 37Z" fill="#e5f4fb" /></svg>
          </div>
          <div class="app">
            <svg width="36" height="38" viewBox="0 0 36 38"><path d="M10 7V1H26V7" fill="none" stroke="#27a9e1" stroke-width="2" /><rect y="6" width="36" height="32" rx="3" fill="#163e74" /><rect x="11" y="13" width="6" height="7" fill="#f25022" /><rect x="19" y="13" width="6" height="7" fill="#7fba00" /><rect x="11" y="22" width="6" height="7" fill="#00a4ef" /><rect x="19" y="22" width="6" height="7" fill="#ffb900" /></svg>
          </div>
          <div class="app">${this.chrome()}</div>
          <div class="app">
            ${this.chrome()}
            <svg class="avatar" width="24" height="26" viewBox="0 0 24 26"><ellipse cx="12" cy="13" rx="12" ry="13" fill="#5a5a30" /><ellipse cx="12" cy="10" rx="5" ry="7" fill="#d9b08c" /><path d="M4 24Q12 14 20 24Q12 28 4 24Z" fill="#2a7a60" /></svg>
          </div>
          <div class="app sel">
            <svg width="36" height="36" viewBox="0 0 36 36"><rect width="36" height="36" fill="#0078d4" /><rect x="19" width="17" height="36" fill="#d6940c" /><rect x="19" width="8" height="36" fill="#e8ab12" /><rect x="11" y="10" width="14" height="26" fill="#f0bf16" /><rect x="3" y="20" width="14" height="16" fill="#f9de73" /></svg>
          </div>
        </div>
        <div class="clock"><div>10:29</div><div>24/05/2023</div></div>
      </div>
    `;
  }

  render() {
    return html`
      <div class="tabs">
        ${plainTabs.map(
          ([label, w]) => html`<div class="tab" style="width:${w}px">${label}</div>`
        )}
        <div class="ctx" style="width:126px">Formato</div>
        <div class="ctx" style="width:201px">Dados / Analisar</div>
        <div class="ctx" style="width:257px">Ferramentas da tabela</div>
        <div class="ctx" style="width:262px"><span class="on">Ferramentas de coluna</span></div>
      </div>
      ${this.ribbon()}
      <div class="main">
        <div class="rail">
          <svg width="22" height="20" viewBox="0 0 22 20"><path d="M1 0V19H22" fill="none" stroke="#555" stroke-width="1.5" /><path d="M5 6H9V16H5ZM11 10H14V16H11ZM16 2H20V16H16Z" fill="none" stroke="#555" stroke-width="1.3" /></svg>
          <svg width="24" height="22" viewBox="0 0 24 22"><rect x="1" y="1" width="22" height="20" fill="none" stroke="#8a8886" stroke-width="1.4" /><path d="M1 6H23M1 11H23M1 16H23M8 6V21M16 6V21" stroke="#8a8886" /></svg>
          <svg width="28" height="28" viewBox="0 0 28 28"><path d="M15 1H26V11H15ZM1 9H13V19H1ZM15 15H26V27H15Z M9 19V24H15M15 11H9V9" fill="none" stroke="#8a8886" stroke-width="1.5" /></svg>
        </div>
        <div class="mid">
          <div class="fbar">
            <div class="fbtns">
              <svg width="22" height="22" viewBox="0 0 22 22"><path d="M1 1L21 21M21 1L1 21" stroke="#333" stroke-width="2" /></svg>
              <svg width="26" height="20" viewBox="0 0 26 20"><path d="M1 10L9 19L25 1" fill="none" stroke="#333" stroke-width="2" /></svg>
            </div>
            <div class="ftext">
              <span><b>1</b>faturamento = <i>[Quantidade]</i>*<i>[valor produto]</i></span>
              <div class="fexp">${bigChevron}</div>
            </div>
          </div>
          ${this.work()}
          <div class="pages">
            <div class="parrows">
              <svg width="7" height="13" viewBox="0 0 7 13"><path d="M7 0V13L0 6.5Z" fill="#c8c6c4" /></svg>
              <svg width="7" height="13" viewBox="0 0 7 13"><path d="M0 0V13L7 6.5Z" fill="#c8c6c4" /></svg>
            </div>
            <div class="ptab">Página 1</div>
            <div class="padd">
              <svg width="18" height="18" viewBox="0 0 18 18"><path d="M9 1V17M1 9H17" stroke="#fff" stroke-width="4.5" /></svg>
            </div>
          </div>
        </div>
        ${this.viz()} ${this.dataPane()}
      </div>
      <div class="status">
        <span>Página 1 de 1</span>
        <div class="zoom">
          <span class="minus">-</span>
          <div class="slider"><div class="thumb"></div><div class="tick"></div></div>
          <span class="plus">+</span>
          <span class="zpct">53%</span>
          <svg class="zfit" width="24" height="19" viewBox="0 0 24 19"><rect x="1" y="1" width="22" height="17" fill="none" stroke="#3f6d8c" stroke-width="1.4" /><path d="M4 8V4H8M16 4H20V8M4 11V15H8M16 15H20V11" fill="none" stroke="#444" stroke-width="1.2" /></svg>
        </div>
      </div>
      ${this.taskbar()}
    `;
  }
}
